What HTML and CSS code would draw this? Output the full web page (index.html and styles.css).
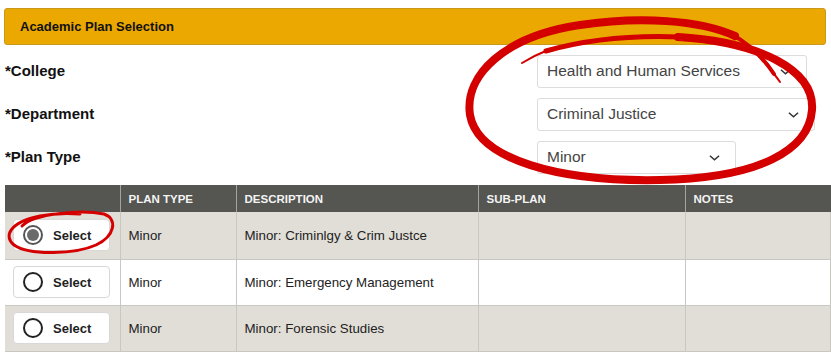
FILE: index.html
```html
<!DOCTYPE html>
<html lang="en">
<head>
  <meta charset="UTF-8">
  <title>Academic Plan Selection</title>
  <link rel="stylesheet" href="styles.css">
</head>
<body>
  <div class="page">
    <div class="panel-title">Academic Plan Selection</div>

    <div class="plan-form">
      <div class="form-row">
        <label class="form-label">*College</label>
        <div class="select-wrap select-college">
          <select><option>Health and Human Services</option></select>
          <svg class="chevron" viewBox="0 0 12 8"><path d="M1 1.5 L6 6 L11 1.5"/></svg>
        </div>
      </div>
      <div class="form-row">
        <label class="form-label">*Department</label>
        <div class="select-wrap select-dept">
          <select><option>Criminal Justice</option></select>
          <svg class="chevron" viewBox="0 0 12 8"><path d="M1 1.5 L6 6 L11 1.5"/></svg>
        </div>
      </div>
      <div class="form-row">
        <label class="form-label">*Plan Type</label>
        <div class="select-wrap select-type">
          <select><option>Minor</option></select>
          <svg class="chevron" viewBox="0 0 12 8"><path d="M1 1.5 L6 6 L11 1.5"/></svg>
        </div>
      </div>
    </div>

    <table class="plans">
      <colgroup>
        <col class="col-select">
        <col class="col-type">
        <col class="col-desc">
        <col class="col-sub">
        <col>
      </colgroup>
      <thead>
        <tr>
          <th></th>
          <th>Plan Type</th>
          <th>Description</th>
          <th>Sub-Plan</th>
          <th>Notes</th>
        </tr>
      </thead>
      <tbody>
        <tr class="shaded">
          <td><button class="select-btn checked"><span class="radio"></span>Select</button></td>
          <td>Minor</td>
          <td>Minor: Criminlgy &amp; Crim Justce</td>
          <td></td>
          <td></td>
        </tr>
        <tr>
          <td><button class="select-btn"><span class="radio"></span>Select</button></td>
          <td>Minor</td>
          <td>Minor: Emergency Management</td>
          <td></td>
          <td></td>
        </tr>
        <tr class="shaded">
          <td><button class="select-btn"><span class="radio"></span>Select</button></td>
          <td>Minor</td>
          <td>Minor: Forensic Studies</td>
          <td></td>
          <td></td>
        </tr>
      </tbody>
    </table>
  </div>

  <!-- red marker annotations drawn over the page -->
  <svg class="annotations" viewBox="0 0 831 355" width="831" height="355">
    <g fill="none" stroke="#d40000" stroke-linecap="round">
      <path stroke-width="2" d="M522,63 C530,58 538,54 548,50"/>
      <path stroke-width="5" d="M546,51 C585,40 630,35 680,37"/>
      <path stroke-width="8" d="M678,37 C760,42 815,70 812,110 C809,150 760,178 660,180 C560,182 478,160 470,115 C464,75 505,36 580,25 C640,16 700,20 735,36"/>
      <path stroke-width="4" d="M733,35 C752,46 766,62 774,74"/>
      <path stroke-width="2" d="M772,72 C776,76 778,79 780,82"/>
      <path stroke-width="3" d="M22,226 C34,214 80,209 104,214 C118,219 115,236 96,245 C76,254 30,256 14,245 C3,236 10,222 40,216 C55,213 68,213 80,214"/>
    </g>
  </svg>
</body>
</html>
```

FILE: styles.css
```css
* {
  margin: 0;
  padding: 0;
  box-sizing: border-box;
}

body {
  font-family: "Liberation Sans", Arial, sans-serif;
  color: #111;
  background: #fff;
  width: 831px;
  height: 355px;
  overflow: hidden;
  position: relative;
}

.page {
  padding: 8px 0 0 4px;
}

.panel-title {
  width: 822px;
  height: 37px;
  line-height: 35px;
  padding-left: 15px;
  background: #eaa800;
  border: 1px solid #c99a1a;
  border-radius: 3px;
  font-size: 13px;
  font-weight: bold;
  color: #111;
}

.plan-form {
  margin-top: 10px;
  display: flex;
  flex-direction: column;
  gap: 10px;
}

.form-row {
  display: grid;
  grid-template-columns: 533px auto;
  align-items: center;
  height: 33px;
}

.form-label {
  padding-left: 1px;
  margin-top: -2px;
  font-size: 15px;
  font-weight: bold;
  color: #111;
}

.select-wrap {
  position: relative;
  height: 33px;
}

.select-college { width: 270px; }
.select-dept { width: 278px; }
.select-type { width: 199px; }

.select-wrap select {
  appearance: none;
  -webkit-appearance: none;
  width: 100%;
  height: 100%;
  padding: 0 0 2px 9px;
  border: 1px solid #dcdcdc;
  border-radius: 3px;
  background: #fff;
  font-family: "Liberation Sans", Arial, sans-serif;
  font-size: 15.5px;
  color: #444;
}

.chevron {
  position: absolute;
  right: 16px;
  top: 13px;
  width: 11px;
  height: 8px;
  fill: none;
  stroke: #333;
  stroke-width: 1.6;
  pointer-events: none;
}

.plans {
  margin: 11px 0 0 1px;
  width: 826px;
  border-collapse: collapse;
  table-layout: fixed;
  font-size: 13.3px;
}

.col-select { width: 115px; }
.col-type { width: 116px; }
.col-desc { width: 242px; }
.col-sub { width: 207px; }

.plans th {
  height: 27px;
  background: #555551;
  color: #f4f4f4;
  font-size: 11.5px;
  font-weight: bold;
  text-transform: uppercase;
  text-align: left;
  padding: 0 0 0 8px;
  border-left: 1px solid #a3a3a0;
}

.plans th:first-child {
  border-left: none;
}

.plans td {
  height: 46px;
  padding: 0 0 0 8px;
  color: #222;
  border: 1px solid #c9c7c1;
  background: #fff;
}

.plans td:first-child {
  border-left: none;
}

.plans tr.shaded td {
  background: #e1ded7;
}

.plans tbody tr:first-child td {
  height: 47px;
  border-top: none;
}

.select-btn {
  display: flex;
  align-items: center;
  gap: 10px;
  width: 97px;
  height: 32px;
  padding-left: 9px;
  background: #fff;
  border: 1px solid #d8d8d8;
  border-radius: 4px;
  font-family: "Liberation Sans", Arial, sans-serif;
  font-size: 13px;
  font-weight: bold;
  color: #222;
}

.radio {
  width: 20px;
  height: 20px;
  border: 2px solid #222;
  border-radius: 50%;
  display: flex;
  align-items: center;
  justify-content: center;
}

.select-btn.checked .radio {
  border-color: #555;
}

.select-btn.checked .radio::after {
  content: "";
  width: 12px;
  height: 12px;
  border-radius: 50%;
  background: #6a6a6a;
}

.annotations {
  position: absolute;
  left: 0;
  top: 0;
  pointer-events: none;
}
```
